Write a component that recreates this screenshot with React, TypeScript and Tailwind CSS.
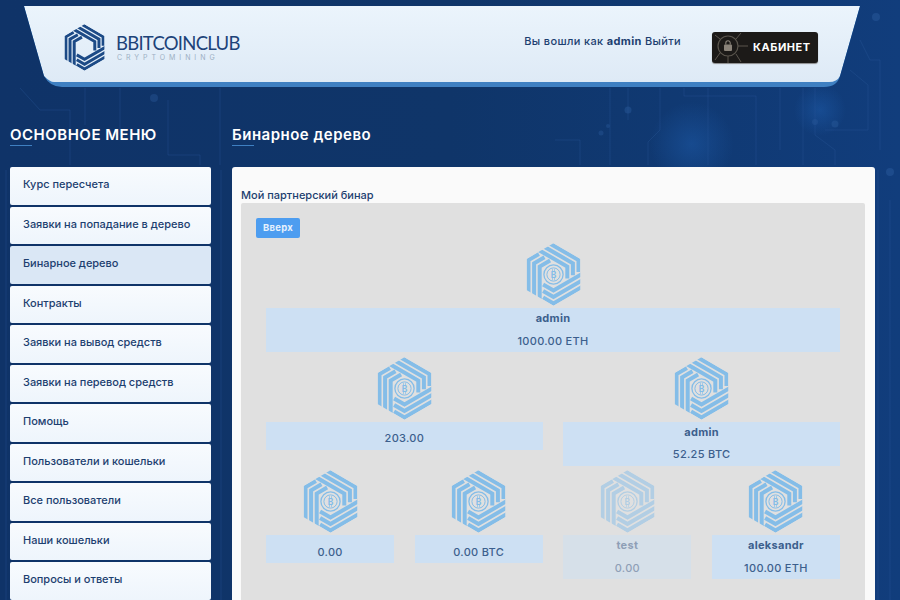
const menuItems = [
  "Курс пересчета",
  "Заявки на попадание в дерево",
  "Бинарное дерево",
  "Контракты",
  "Заявки на вывод средств",
  "Заявки на перевод средств",
  "Помощь",
  "Пользователи и кошельки",
  "Все пользователи",
  "Наши кошельки",
  "Вопросы и ответы",
];

const APOTHEM = 27;
const STRIPES = [25, 19.4, 13.8];

// where two lines meet, each line given as normal angle + distance from the centre
function hit(deg1: number, d1: number, deg2: number, d2: number) {
  const a1 = (deg1 * Math.PI) / 180;
  const a2 = (deg2 * Math.PI) / 180;
  const det = Math.cos(a1) * Math.sin(a2) - Math.sin(a1) * Math.cos(a2);
  const x = (d1 * Math.sin(a2) - d2 * Math.sin(a1)) / det;
  const y = (Math.cos(a1) * d2 - Math.cos(a2) * d1) / det;
  return `${x.toFixed(2)},${y.toFixed(2)}`;
}

// one stripe of a pinwheel arm: along the top-right edge, then down the right edge
function stripe(a: number) {
  return `${hit(-60, a, -120, APOTHEM + 3)} ${hit(-60, a, 0, a)} ${hit(0, a, 60, 10.4)}`;
}

const HEX_OUTLINE = [-90, -30, 30, 90, 150, 210]
  .map((deg) => {
    const r = APOTHEM / Math.cos(Math.PI / 6);
    return `${(r * Math.cos((deg * Math.PI) / 180)).toFixed(2)},${(r * Math.sin((deg * Math.PI) / 180)).toFixed(2)}`;
  })
  .join(" ");

function HexMark({ color, coin, className }: { color: string; coin?: boolean; className: string }) {
  return (
    <svg viewBox="-27.5 -31.5 55 63" className={className}>
      <clipPath id="hex-outline">
        <polygon points={HEX_OUTLINE} />
      </clipPath>
      <g clipPath="url(#hex-outline)">
        {[0, 120, 240].map((rot) => (
          <g key={rot} transform={`rotate(${rot})`} fill="none" stroke={color} strokeWidth="4" strokeLinejoin="miter">
            {STRIPES.map((a) => (
              <polyline key={a} points={stripe(a)} />
            ))}
          </g>
        ))}
      </g>
      {coin && (
        <>
          <circle r="9.6" fill="none" stroke={color} strokeWidth="1.3" />
          <circle r="6.6" fill="none" stroke={color} strokeWidth="1" />
          <path d="M-1 -5.4V-3.4M1 -5.4V-3.4M-1 3.4V5.4M1 3.4V5.4" stroke={color} strokeWidth="0.7" />
          <text y="3" textAnchor="middle" fontSize="8.5" fontWeight="700" fill={color} fontFamily="Inter, sans-serif">
            B
          </text>
        </>
      )}
    </svg>
  );
}

function CircuitBackground() {
  const stroke = "#2a5a9c";
  return (
    <svg className="absolute inset-0 h-full w-full" viewBox="0 0 900 600" fill="none">
      <defs>
        <radialGradient id="glow">
          <stop offset="0" stopColor="#1f5fb0" stopOpacity="0.45" />
          <stop offset="1" stopColor="#1f5fb0" stopOpacity="0" />
        </radialGradient>
      </defs>
      <circle cx="692" cy="144" r="42" fill="url(#glow)" />
      <circle cx="820" cy="110" r="26" fill="url(#glow)" />
      <g stroke={stroke} strokeOpacity="0.32" strokeWidth="1">
        <path d="M660 88V130L648 142V165" />
        <path d="M684 88V96H756V165" />
        <path d="M708 88V165" />
        <path d="M780 88V150" />
        <path d="M803 88V165" />
        <path d="M815 88V135L835 150V165" />
        <path d="M860 40L870 60H880V150" />
        <path d="M850 70L868 85V130H825" />
        <path d="M610 88V165" />
        <path d="M628 88V120" />
        <path d="M555 140H580V165" />
        <path d="M20 88L40 110H70V165" />
        <path d="M85 88V125" />
        <path d="M120 88V135" />
        <path d="M168 100V155H200V165" />
        <path d="M220 88V165" />
        <path d="M878 170V600" />
        <path d="M890 200V600" />
        <path d="M221 170V600" />
        <path d="M6 170V600" />
      </g>
      <g fill={stroke}>
        <circle cx="628" cy="110" r="3.5" fillOpacity="0.45" />
        <circle cx="835" cy="124" r="3.5" fillOpacity="0.45" />
        <circle cx="815" cy="122" r="3" fillOpacity="0.4" />
        <circle cx="876" cy="17" r="4" fillOpacity="0.5" />
        <circle cx="890" cy="172" r="4" fillOpacity="0.5" />
        <circle cx="154" cy="98" r="4" fillOpacity="0.4" />
        <circle cx="601" cy="133" r="2.5" fillOpacity="0.4" />
        <circle cx="608" cy="126" r="2" fillOpacity="0.4" />
      </g>
    </svg>
  );
}

function Header() {
  return (
    <div className="relative ml-6 mt-[6px] h-[81px] w-[836px] bg-[#3f80c2] [clip-path:path('M0_0H836L816_70Q813_81_800_81H38Q26_81_20_70Z')]">
      <div className="flex h-[76px] items-center bg-gradient-to-b from-[#ebf4fc] to-[#deeaf6] pl-10 pr-[42px] [clip-path:path('M0_0H836L816_70Q813_76_805_76H30Q26_76_20_70Z')]">
        <HexMark color="#1c4a86" className="mt-[6px] h-[47px] w-[41px]" />
        <div className="ml-[11px] mt-[5px] flex flex-col">
          <span className="font-['Lato',sans-serif] text-[18.5px] leading-[22px] tracking-[-0.75px] text-[#1d4379]">BBITCOINCLUB</span>
          <span className="ml-px mt-[-1px] font-['Inter',sans-serif] text-[7px] leading-[9px] tracking-[3.95px] text-[#9db0c4]">CRYPTOMINING</span>
        </div>
        <p className="ml-auto mb-[6px] font-['Inter',sans-serif] text-[11px] font-medium tracking-[0.35px] text-[#1d3f70]">
          Вы вошли как <b className="font-bold">admin</b> Выйти
        </p>
        <div className="ml-[31px] mt-[6px] flex h-[31px] w-[106px] items-center overflow-hidden rounded-[3px] bg-[#1c1a18] shadow-[0_1px_1px_#8a8a8a]">
          <svg viewBox="0 0 40 31" className="h-[31px] w-[40px] shrink-0" fill="none" stroke="#5a554d">
            <circle cx="16" cy="14" r="10" strokeWidth="1.2" />
            <path d="M8 7L3 3M24 7L29 1M26 14H36M24 22L29 30M8 21L3 28M16 24V31" strokeWidth="1" />
            <rect x="12" y="12.5" width="8" height="6.5" rx="1" fill="#8a8379" stroke="none" />
            <path d="M13.8 12.5V11a2.2 2.2 0 0 1 4.4 0v1.5" strokeWidth="1.1" stroke="#8a8379" />
          </svg>
          <span className="ml-px font-['Inter',sans-serif] text-[11px] font-bold tracking-[0.55px] text-white">КАБИНЕТ</span>
        </div>
      </div>
    </div>
  );
}

function SectionTitle({ children }: { children: string }) {
  return (
    <div className="relative h-[23px] pt-[2px]">
      <h2 className="font-['Inter',sans-serif] text-[15px] font-semibold leading-[20px] tracking-[0.5px] text-white">{children}</h2>
      <div className="absolute bottom-0 left-0 h-px w-[22px] bg-[#3f80c2]" />
    </div>
  );
}

function TreeNode({
  name,
  amount,
  muted,
  className,
}: {
  name?: string;
  amount: string;
  muted?: boolean;
  className?: string;
}) {
  return (
    <div className={`flex flex-col items-center ${muted ? "opacity-50" : ""} ${className ?? ""}`}>
      <HexMark color="#84bde8" coin className="h-[63px] w-[55px]" />
      <div className="mt-[2px] flex w-full flex-col items-center bg-[#cde0f3] font-['Inter',sans-serif] text-[11px] tracking-[0.3px] text-[#3c5f8d]">
        {name && <span className="mt-px h-[19px] font-bold leading-[19px]">{name}</span>}
        <span className={`${name ? "mt-[3.5px] mb-[1.5px]" : "mt-[7.5px] mb-[1.5px]"} h-[19px] font-medium leading-[19px]`}>{amount}</span>
      </div>
    </div>
  );
}

export default function App() {
  return (
    <div className="relative h-[600px] w-[900px] overflow-hidden bg-gradient-to-r from-[#0f3368] via-[#0f3569] to-[#113d7c]">
      <CircuitBackground />
      <div className="relative">
        <Header />
        <div className="ml-[10px] mt-[36px] flex gap-[21px]">
          <aside className="w-[201px] shrink-0">
            <SectionTitle>ОСНОВНОЕ МЕНЮ</SectionTitle>
            <nav className="mt-[21px] flex flex-col gap-[2px]">
              {menuItems.map((item) => (
                <a
                  key={item}
                  className={`flex h-[37.5px] items-center rounded-[2px] pb-[3px] pl-[13px] font-['Inter',sans-serif] text-[11px] font-medium tracking-[-0.02px] text-[#1d3f70] ${
                    item === "Бинарное дерево" ? "bg-[#dae7f5]" : "bg-gradient-to-b from-[#f8fbfe] to-[#eef5fc]"
                  }`}
                >
                  {item}
                </a>
              ))}
            </nav>
          </aside>
          <main className="w-[643px] shrink-0">
            <SectionTitle>Бинарное дерево</SectionTitle>
            <div className="mt-[21px] rounded-[3px] bg-[#fafafa] px-[9px] pb-6 pt-[22px]">
              <p className="h-[14px] font-['Inter',sans-serif] text-[11px] font-medium leading-[13px] tracking-[0px] text-[#1d3f70]">
                Мой партнерский бинар
              </p>
              <div className="w-[624px] rounded-[2px] bg-[#e0e0e0] px-[25px] pt-[15px] pb-10">
                <button className="ml-[-10px] block h-[20px] w-[44px] rounded-[2px] bg-[#4d9df0] font-['Inter',sans-serif] text-[9.5px] font-bold tracking-[0.3px] text-[#e6f1fd]">
                  Вверх
                </button>
                <div className="mt-[5px] grid grid-cols-4 gap-x-[20.5px] gap-y-[4.5px]">
                  <TreeNode className="col-span-4" name="admin" amount="1000.00 ETH" />
                  <TreeNode className="col-span-2" amount="203.00" />
                  <TreeNode className="col-span-2" name="admin" amount="52.25 BTC" />
                  <TreeNode amount="0.00" />
                  <TreeNode amount="0.00 BTC" />
                  <TreeNode name="test" amount="0.00" muted />
                  <TreeNode name="aleksandr" amount="100.00 ETH" />
                </div>
              </div>
            </div>
          </main>
        </div>
      </div>
    </div>
  );
}
